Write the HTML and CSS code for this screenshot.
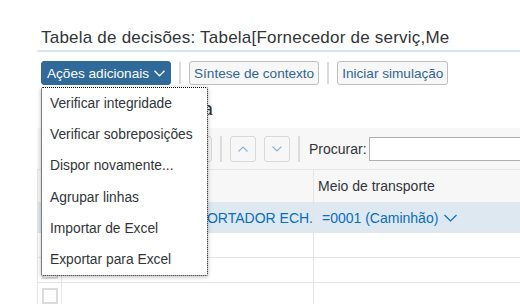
FILE: index.html
```html
<!doctype html>
<html lang="pt">
<head>
<meta charset="utf-8">
<title>Tabela de decisões</title>
<link rel="stylesheet" href="styles.css">
</head>
<body>

	<div class="page">

		<h1 class="title">Tabela de decisões: Tabela[Fornecedor de serviç,Me</h1>

		<div class="toolbar">
			<button class="btn btn-primary">Ações adicionais
				<svg width="11" height="7" viewBox="0 0 11 7"><path d="M0.5 0.8 L5.5 5.8 L10.5 0.8" fill="none" stroke="#fff" stroke-width="1.3"/></svg>
			</button>
			<span class="sep"></span>
			<button class="btn">Síntese de contexto</button>
			<span class="sep"></span>
			<button class="btn">Iniciar simulação</button>
		</div>

		<h2 class="section-title">Tabela</h2>

		<div class="grid">

			<div class="grid-toolbar">
				<button class="tool-btn wide"></button>
				<span class="sep small"></span>
				<button class="tool-btn">
					<svg width="10" height="6" viewBox="0 0 10 6"><path d="M0.5 5.5 L5 1 L9.5 5.5" fill="none" stroke="#8db6dc" stroke-width="1.2"/></svg>
				</button>
				<button class="tool-btn">
					<svg width="10" height="6" viewBox="0 0 10 6"><path d="M0.5 0.5 L5 5 L9.5 0.5" fill="none" stroke="#8db6dc" stroke-width="1.2"/></svg>
				</button>
				<span class="sep small"></span>
				<label class="search-label">Procurar:</label>
				<input class="search" type="text">
			</div>

			<div class="row head">
				<div class="cell sel"></div>
				<div class="cell c1"></div>
				<div class="cell c2">Meio de transporte</div>
			</div>

			<div class="row selected">
				<div class="cell sel"></div>
				<div class="cell c1 link"><span>TRANSPORTADOR ECH.</span></div>
				<div class="cell c2 link">=0001 (Caminhão)
					<svg width="13" height="8" viewBox="0 0 13 8"><path d="M0.5 1 L6.5 7 L12.5 1" fill="none" stroke="#0a6dc0" stroke-width="1.2"/></svg>
				</div>
			</div>

			<div class="row">
				<div class="cell sel"><span class="check"></span></div>
				<div class="cell c1"></div>
				<div class="cell c2"></div>
			</div>

			<div class="row">
				<div class="cell sel"><span class="check"></span></div>
				<div class="cell c1"></div>
				<div class="cell c2"></div>
			</div>

			<div class="row">
				<div class="cell sel"><span class="check"></span></div>
				<div class="cell c1"></div>
				<div class="cell c2"></div>
			</div>

		</div>

	</div>

	<ul class="menu">
		<li>Verificar integridade</li>
		<li>Verificar sobreposições</li>
		<li>Dispor novamente...</li>
		<li>Agrupar linhas</li>
		<li>Importar de Excel</li>
		<li>Exportar para Excel</li>
	</ul>

</body>
</html>
```

FILE: styles.css
```css
body { margin: 0; font: 14px "Liberation Sans", Arial, sans-serif; color: #32363a; background: #fff; overflow: hidden; }

.page { padding-left: 37px; }

.title { margin: 0; padding: 27px 0 1px 4px; font-size: 17px; letter-spacing: 0.22px; font-weight: normal; line-height: 22px; color: #32363a; border-bottom: 2px solid #d6e5f2; white-space: nowrap; }

/* top toolbar */
.toolbar { display: flex; align-items: center; gap: 8px; margin: 9px 0 0 4px; height: 24px; }
.btn { flex: none; height: 24px; padding: 0 4px; font: 13.6px "Liberation Sans", Arial, sans-serif; color: #2f6698; background: #f7f7f7; border: 1px solid #bfbfbf; border-radius: 3px; }
.btn-primary { display: flex; align-items: center; gap: 5px; padding: 0 5px; color: #fff; background: #306a9b; border-color: #306a9b; }
.sep { flex: none; width: 2px; height: 22px; background: #dadada; }
.sep.small { height: 26px; }

.section-title { margin: 0; width: 176px; padding-top: 13px; height: 30px; box-sizing: border-box; text-align: right; font-size: 20px; font-weight: normal; line-height: 22px; white-space: nowrap; overflow: hidden; }

/* table */
.grid { margin-top: 13px; }
.grid-toolbar { display: flex; align-items: center; gap: 8px; height: 41px; background: #f7f7f7; border-bottom: 1px solid #e5e5e5; }
.tool-btn { flex: none; display: flex; align-items: center; justify-content: center; width: 26px; height: 26px; padding: 0; background: #f7f7f7; border: 1px solid #d9d9d9; border-radius: 3px; }
.tool-btn.wide { width: 40px; margin-left: 135px; }
.search-label { flex: none; margin-left: 1px; color: #32363a; }
.search { flex: 1; min-width: 0; height: 24px; margin: 0 0 0 -6px; padding: 0 4px; border: 1px solid #b0b0b0; border-right: none; box-sizing: border-box; background: #fff; }

.row { display: flex; height: 25px; border-bottom: 1px solid #e5e5e5; box-sizing: border-box; }
.row.head { height: 33px; background: #f7f7f7; }
.row.selected { height: 30px; background: #dde8f1; }
.cell { display: flex; align-items: center; box-sizing: border-box; border-right: 1px solid #e5e5e5; white-space: nowrap; overflow: hidden; }
.cell.sel { width: 25px; border-left: 1px solid #e5e5e5; justify-content: center; align-items: flex-start; }
.cell.c1 { width: 252px; justify-content: flex-end; }
.cell.c2 { flex: 1; padding-left: 4px; border-right: none; }
.row.selected .c2 { padding-left: 8px; gap: 6px; }
.link { color: #0a6dc0; }
.check { width: 16px; height: 16px; margin-top: 5px; border: 2px solid #dcdcdc; box-sizing: border-box; background: #fff; }

/* dropdown menu */
.menu { position: absolute; left: 41px; top: 87px; width: 167px; height: 189px; margin: 0; padding: 0; list-style: none; box-sizing: border-box; background: #fff; border: 1px dotted #000; border-radius: 2px; box-shadow: 0 1px 4px rgba(0, 0, 0, 0.25); }
.menu li { height: 31.2px; line-height: 31.2px; padding-left: 8px; font-size: 13.8px; color: #32363a; white-space: nowrap; }
```
